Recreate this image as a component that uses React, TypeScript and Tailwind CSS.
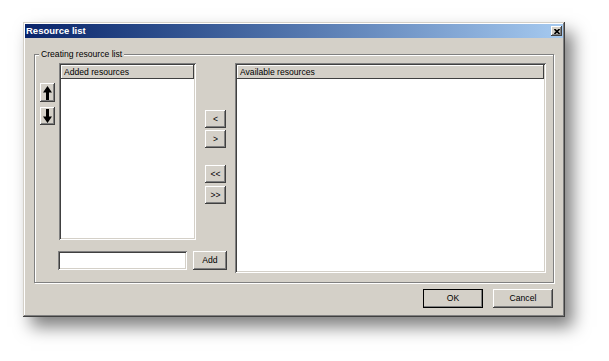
const raised =
  "shadow-[inset_-1px_-1px_#404040,inset_1px_1px_#ffffff,inset_-2px_-2px_#808080,inset_2px_2px_#d4d0c8]";
const sunken =
  "shadow-[inset_1px_1px_#808080,inset_-1px_-1px_#ffffff,inset_2px_2px_#404040,inset_-2px_-2px_#d4d0c8]";

function Btn({ label, className = "" }: { label: string; className?: string }) {
  return (
    <button
      type="button"
      className={`flex items-center justify-center bg-[#d4d0c8] text-black leading-none ${raised} ${className}`}
    >
      {label}
    </button>
  );
}

function ArrowBtn({ down = false, className = "" }: { down?: boolean; className?: string }) {
  return (
    <div className={`flex w-[15px] items-center justify-center bg-[#d4d0c8] ${raised} ${className}`}>
      <svg width="9" height="14" viewBox="0 0 9 14" className={down ? "rotate-180" : ""}>
        <path d="M4.5 0 L9 6.5 L6 6.5 L6 14 L3 14 L3 6.5 L0 6.5 Z" fill="#000" />
      </svg>
    </div>
  );
}

function ListBox({ title, className = "" }: { title: string; className?: string }) {
  return (
    <div className={`flex flex-col bg-white p-[2px] ${sunken} ${className}`}>
      <div className="flex h-[14px] items-center bg-[#d4d0c8] pl-[3px] leading-none shadow-[inset_-1px_-1px_#404040,inset_1px_1px_#ffffff]">
        {title}
      </div>
    </div>
  );
}

export default function App() {
  return (
    <div
      className="h-[361px] w-[609px] overflow-hidden bg-white pl-[23px] pt-[22px] text-[8.6px] text-black"
      style={{ fontFamily: '"Liberation Sans", Arial, sans-serif' }}
    >
      <div className="flex h-[295px] w-[542px] flex-col bg-[#d4d0c8] p-[2px] shadow-[inset_-1px_-1px_#404040,inset_1px_1px_#d4d0c8,inset_-2px_-2px_#808080,inset_2px_2px_#ffffff,8px_10px_16px_rgba(0,0,0,0.5)]">
        {/* title bar */}
        <div className="flex h-[14px] items-center justify-between bg-gradient-to-r from-[#0a246a] to-[#a6caf0] pl-[1px] pr-[1px]">
          <span className="text-[9.5px] font-bold leading-none text-white">Resource list</span>
          <div className={`flex h-[10px] w-[11px] items-center justify-center bg-[#d4d0c8] ${raised}`}>
            <svg width="6" height="5" viewBox="0 0 6 5">
              <path d="M0.5 0 L5.5 5 M5.5 0 L0.5 5" stroke="#000" strokeWidth="1.6" />
            </svg>
          </div>
        </div>

        {/* group box */}
        <div className="ml-[9px] mt-[16px] flex h-[229px] w-[520px] flex-col border border-[#808080] shadow-[1px_1px_#ffffff,inset_1px_1px_#ffffff]">
          <div className="-mt-[6px] ml-[4px] w-fit bg-[#d4d0c8] px-[2px] leading-[11px]">Creating resource list</div>
          <div className="mt-[3px] flex pl-[5px]">
            <div className="flex w-[187px] flex-col">
              <div className="flex items-start">
                <div className="flex flex-col pt-[20px]">
                  <ArrowBtn className="h-[19px]" />
                  <ArrowBtn down className="mt-[5px] h-[18px]" />
                </div>
                <ListBox title="Added resources" className="ml-[4px] h-[177px] w-[137px]" />
                <div className="ml-[9px] flex flex-col pt-[47px]">
                  <Btn label="<" className="h-[18px] w-[21px]" />
                  <Btn label=">" className="mt-[2px] h-[18px] w-[21px]" />
                  <Btn label="<<" className="mt-[17px] h-[18px] w-[21px]" />
                  <Btn label=">>" className="mt-[3px] h-[18px] w-[21px]" />
                </div>
              </div>
              <div className="mt-[11px] flex items-center pl-[18px]">
                <div className={`h-[19px] w-[129px] bg-white ${sunken}`} />
                <Btn label="Add" className="ml-[6px] h-[19px] w-[34px]" />
              </div>
            </div>
            <ListBox title="Available resources" className="ml-[8px] h-[210px] w-[311px]" />
          </div>
        </div>

        {/* dialog buttons */}
        <div className="mt-[6px] flex justify-end gap-[10px] pr-[10px]">
          <Btn label="OK" className="h-[19px] w-[60px] outline outline-1 -outline-offset-1 outline-black" />
          <Btn label="Cancel" className="h-[19px] w-[60px]" />
        </div>
      </div>
    </div>
  );
}
